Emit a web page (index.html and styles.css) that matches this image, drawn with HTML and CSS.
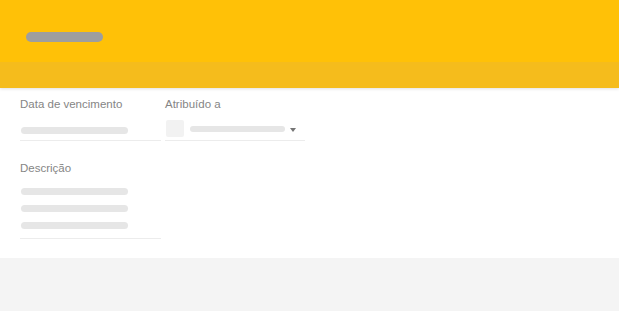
FILE: index.html
```html
<!DOCTYPE html>
<html lang="pt">
<head>
    <meta charset="UTF-8">
    <meta name="viewport" content="width=device-width, initial-scale=1.0">
    <title>Tarefa</title>
    <link rel="stylesheet" href="styles.css">
</head>
<body>
    <div class="card">
        <div class="card-header">
            <div class="title-top">
                <span class="title-pill"></span>
            </div>
            <div class="title-band"></div>
        </div>

        <div class="card-body">
            <div class="row">
                <div class="field field-date">
                    <label class="field-label">Data de vencimento</label>
                    <div class="field-value">
                        <span class="skeleton"></span>
                    </div>
                </div>

                <div class="field field-assignee">
                    <label class="field-label">Atribuído a</label>
                    <div class="field-value select">
                        <span class="avatar"></span>
                        <span class="skeleton skeleton-name"></span>
                        <span class="caret"></span>
                    </div>
                </div>
            </div>

            <div class="field field-desc">
                <label class="field-label">Descrição</label>
                <div class="field-value lines">
                    <span class="skeleton"></span>
                    <span class="skeleton"></span>
                    <span class="skeleton"></span>
                </div>
            </div>
        </div>
    </div>
    <div class="page-footer"></div>
</body>
</html>
```

FILE: styles.css
```css
body {
    margin: 0;
    padding: 0;
    font-family: "Liberation Sans", Arial, sans-serif;
    background: #f4f4f4;
    height: 311px;
    overflow: hidden;
}

.card {
    background: #ffffff;
}

.card-header {
    background: #ffc107;
    box-shadow: 0 1px 3px rgba(0, 0, 0, 0.12);
    position: relative;
    z-index: 1;
}

.title-top {
    height: 30px;
    padding: 32px 0 0 26px;
}

.title-pill {
    display: block;
    width: 77px;
    height: 10px;
    border-radius: 5px;
    background: #9e9e9e;
}

.title-band {
    height: 26px;
    background: #f5bc1c;
}

.card-body {
    height: 162px;
    padding: 8px 20px 0;
}

.row {
    display: flex;
    gap: 4px;
}

.field-label {
    display: block;
    font-size: 11.5px;
    line-height: 16px;
    color: #858585;
}

.field-value {
    border-bottom: 1px solid #ececec;
}

.field-date {
    width: 141px;
}

.field-date .field-value {
    height: 13px;
    padding: 15px 0 0 1px;
}

.skeleton {
    display: block;
    width: 107px;
    height: 7px;
    border-radius: 4px;
    background: #e6e6e6;
}

.field-assignee {
    width: 140px;
}

.select {
    height: 28px;
    padding-left: 1px;
    display: flex;
    align-items: flex-start;
}

.avatar {
    width: 18px;
    height: 17px;
    margin-top: 8px;
    border-radius: 2px;
    background: #f2f2f2;
}

.skeleton-name {
    width: 95px;
    height: 6px;
    margin: 14px 0 0 6px;
}

.caret {
    width: 0;
    height: 0;
    margin: 16px 0 0 5px;
    border-left: 3px solid transparent;
    border-right: 3px solid transparent;
    border-top: 4px solid #757575;
}

.field-desc {
    width: 141px;
    margin-top: 19px;
}

.lines {
    display: flex;
    flex-direction: column;
    gap: 10px;
    padding: 12px 0 9px 1px;
}

.page-footer {
    height: 53px;
    background: #f4f4f4;
}
```
